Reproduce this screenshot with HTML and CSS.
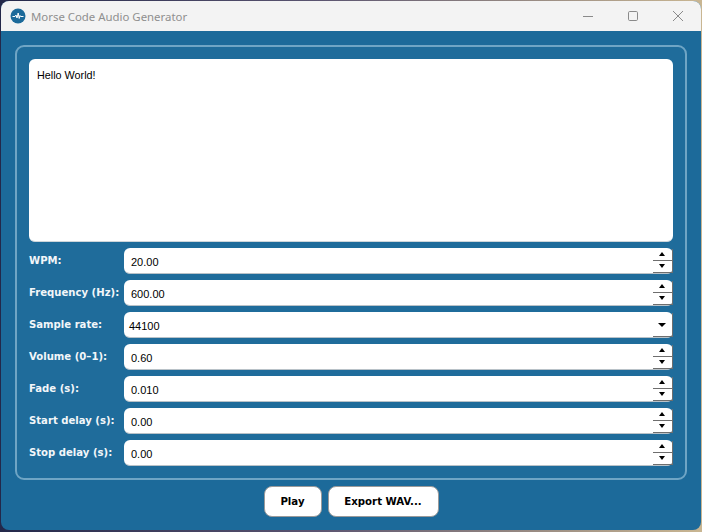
FILE: index.html
```html
<!DOCTYPE html>
<html lang="en">
<head>
<meta charset="utf-8">
<title>Morse Code Audio Generator</title>
<link rel="stylesheet" href="styles.css">
</head>
<body>
<div class="window">
  <header class="titlebar">
    <svg class="app-icon" width="16" height="16" viewBox="0 0 16 16"><circle cx="8" cy="8" r="7.5" fill="#1c6a9a"/><path d="M2.5 8.5H5L6 7l1 3 1.2-5 1 5.5.8-3 .6 1H13.5" fill="none" stroke="#fff" stroke-width="1"/></svg>
    <span class="title">Morse Code Audio Generator</span>
    <div class="controls">
      <svg width="12" height="12" viewBox="0 0 12 12"><path d="M1 6.5H11" stroke="#8a8a8a" stroke-width="1"/></svg>
      <svg width="12" height="12" viewBox="0 0 12 12"><rect x="1.5" y="1.5" width="9" height="9" rx="1.2" fill="none" stroke="#8a8a8a" stroke-width="1"/></svg>
      <svg width="12" height="12" viewBox="0 0 12 12"><path d="M1 1L11 11M11 1L1 11" stroke="#8a8a8a" stroke-width="1"/></svg>
    </div>
  </header>
  <main class="content">
    <section class="panel">
      <div class="textarea">Hello World!</div>
      <div class="form">
        <label class="label">WPM:</label>
        <div class="field"><span class="value">20.00</span><span class="spin"><span class="up"></span><span class="down"></span></span></div>
        <label class="label">Frequency (Hz):</label>
        <div class="field"><span class="value">600.00</span><span class="spin"><span class="up"></span><span class="down"></span></span></div>
        <label class="label">Sample rate:</label>
        <div class="field combo"><span class="value">44100</span><span class="drop"><span class="down"></span></span></div>
        <label class="label">Volume (0–1):</label>
        <div class="field"><span class="value">0.60</span><span class="spin"><span class="up"></span><span class="down"></span></span></div>
        <label class="label">Fade (s):</label>
        <div class="field"><span class="value">0.010</span><span class="spin"><span class="up"></span><span class="down"></span></span></div>
        <label class="label">Start delay (s):</label>
        <div class="field"><span class="value">0.00</span><span class="spin"><span class="up"></span><span class="down"></span></span></div>
        <label class="label">Stop delay (s):</label>
        <div class="field"><span class="value">0.00</span><span class="spin"><span class="up"></span><span class="down"></span></span></div>
      </div>
    </section>
    <div class="actions">
      <button class="btn play">Play</button>
      <button class="btn export">Export WAV...</button>
    </div>
  </main>
</div>
</body>
</html>
```
FILE: styles.css
```css
* { box-sizing: border-box; }
html, body { margin: 0; height: 100%; }
body {
  background: linear-gradient(90deg, #23284a 0%, #5a5470 45%, #c9b692 100%);
  font-family: "Liberation Sans", sans-serif;
  overflow: hidden;
}
.window {
  margin: 1px 1px 0 1px;
  height: 529px;
  border-radius: 8px;
  overflow: hidden;
  display: flex;
  flex-direction: column;
  background: #1c6a9a;
}
.titlebar {
  height: 30px;
  background: #f3f3f3;
  display: flex;
  align-items: center;
  padding-left: 9px;
  flex: none;
}
.app-icon { flex: none; }
.title { margin-left: 5px; font-family: "Noto Sans", sans-serif; font-size: 11.4px; color: #8f8f8f; }
.controls {
  margin-left: auto;
  display: flex;
  gap: 33px;
  padding-right: 17px;
  align-items: center;
}
.controls svg { display: block; }
.content {
  flex: 1;
  padding: 14px 14px 0 14px;
  display: flex;
  flex-direction: column;
}
.panel {
  height: 435px;
  border: 2px solid #6fa5c5;
  border-radius: 9px;
  padding: 12px;
  background: #1f6c9b;
  display: flex;
  flex-direction: column;
  gap: 6px;
}
.textarea {
  height: 183px;
  flex: none;
  background: #fff;
  border-radius: 6px;
  border-bottom: 1px solid #cfd6da;
  padding: 8px;
  font-size: 10.8px;
  line-height: 16px;
  color: #000;
}
.form {
  display: grid;
  grid-template-columns: 95px 1fr;
  row-gap: 6px;
}
.label {
  font-family: "DejaVu Sans", sans-serif;
  font-size: 10.1px;
  font-weight: 700;
  color: #f2f6f9;
  line-height: 16px;
  padding-top: 5px;
  white-space: nowrap;
}
.field {
  height: 26px;
  background: #fff;
  border-radius: 6px;
  border-bottom: 1px solid #b9c2c8;
  display: flex;
  align-items: center;
  font-size: 11px;
  color: #000;
}
.value { padding-left: 7px; padding-top: 3px; }
.combo .value { padding-left: 5px; }
.spin, .drop {
  margin-left: auto;
  width: 20px;
  margin-right: 0.5px;
  height: 24px;
  display: flex;
  flex-direction: column;
  border-right: 1px solid #6e6e6e;
}
.spin .up, .spin .down, .drop .down {
  flex: 1;
  position: relative;
  border-bottom: 1px solid #6e6e6e;
}
.up::after, .down::after {
  content: "";
  position: absolute;
  left: 6px;
  top: 3px;
  border-left: 3.5px solid transparent;
  border-right: 3.5px solid transparent;
}
.up::after { border-bottom: 4px solid #000; }
.down::after { border-top: 4px solid #000; }
.drop .down::after { top: 10px; left: 5px; border-left-width: 4px; border-right-width: 4px; }
.actions {
  display: flex;
  justify-content: center;
  gap: 6px;
  margin-top: 6px;
}
.btn {
  height: 31px;
  background: #fff;
  border: 1px solid #9a9a9a;
  border-radius: 8px;
  font-family: "DejaVu Sans", sans-serif;
  font-size: 10.2px;
  font-weight: 700;
  color: #000;
  padding: 0;
}
.play { width: 58px; }
.export { width: 111px; }
```
